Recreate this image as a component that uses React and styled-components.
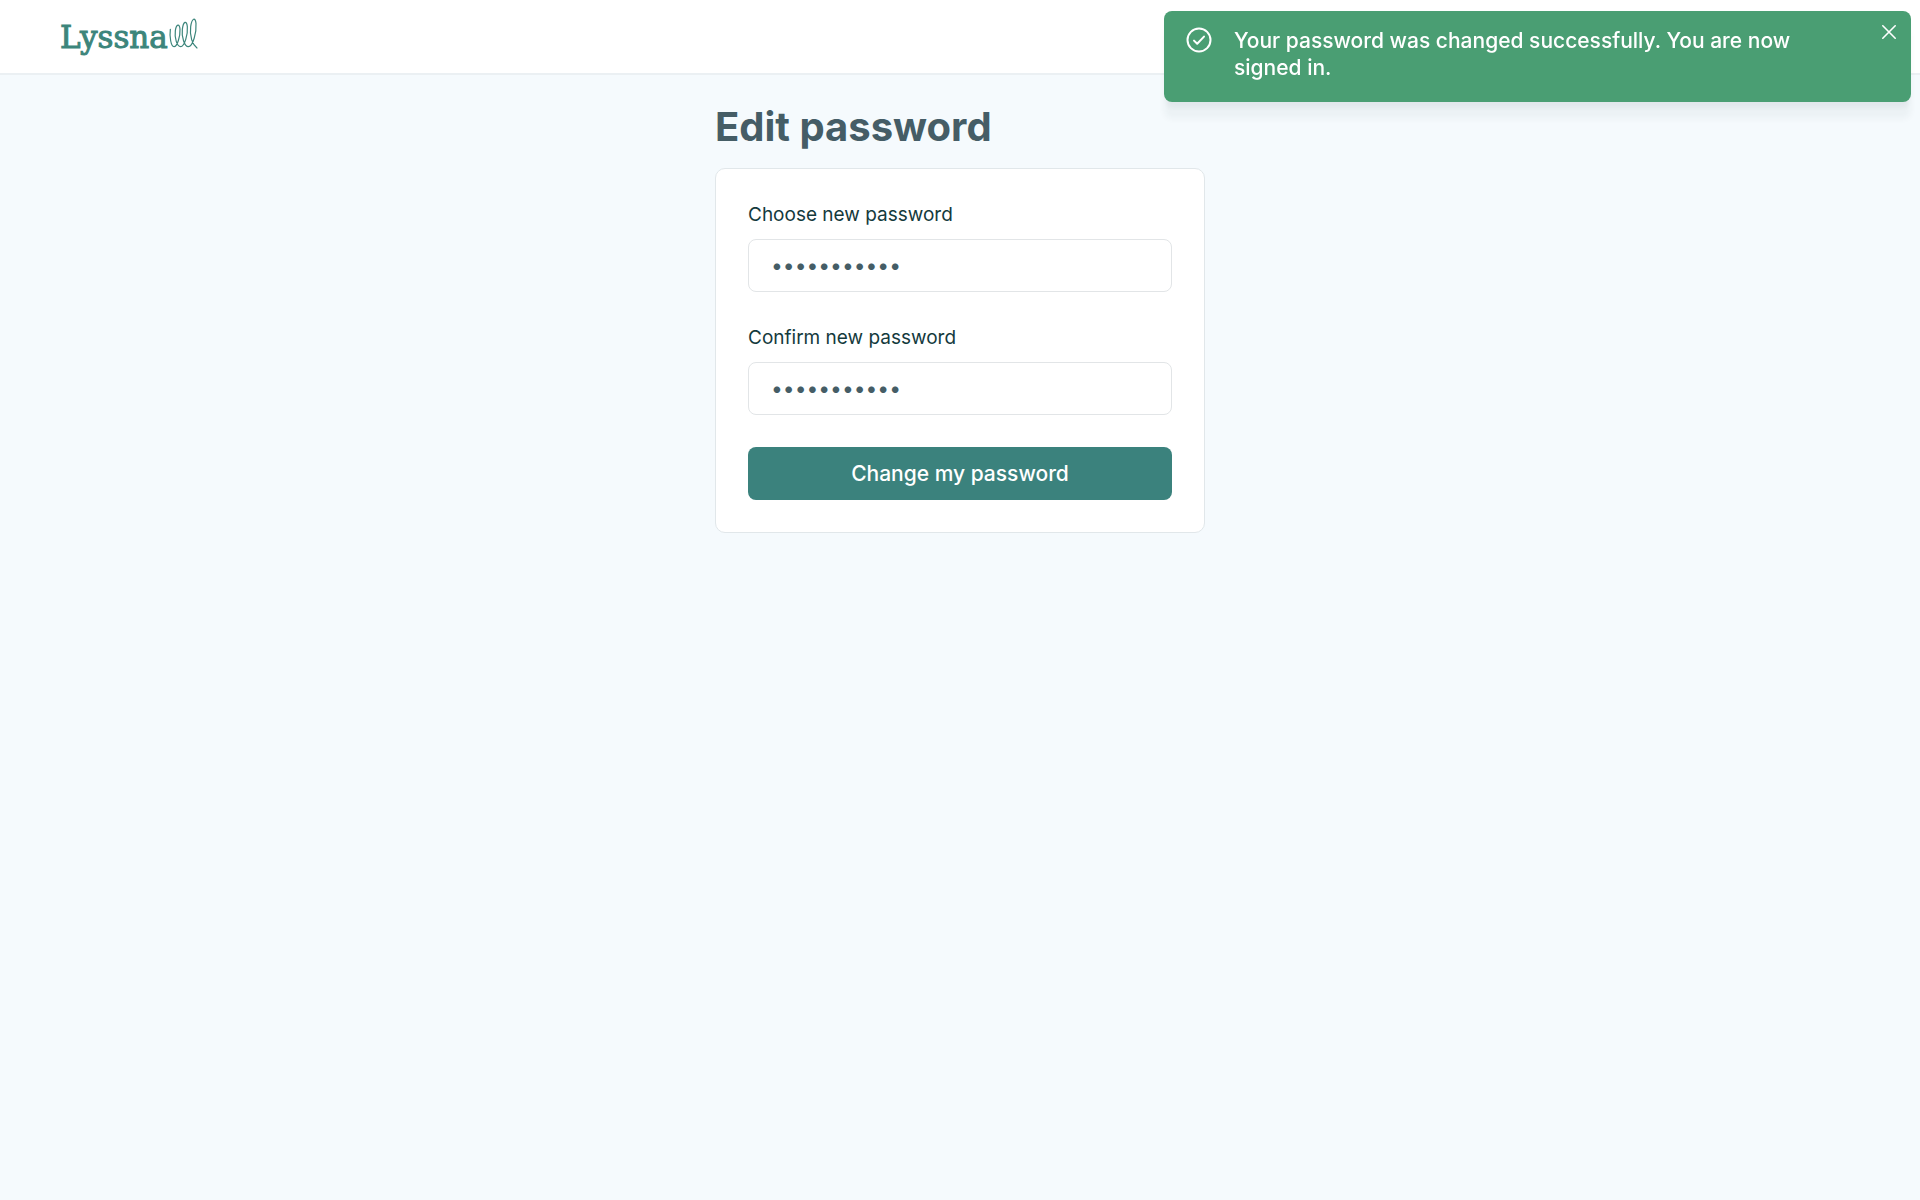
import React, { useState } from 'react';
import styled, { createGlobalStyle } from 'styled-components';

const GlobalStyle = createGlobalStyle`
  * {
    box-sizing: border-box;
  }

  body {
    margin: 0;
    background-color: #f5fafd;
    font-family: Inter, "Liberation Sans", sans-serif;
    color: #455d66;
  }
`;

const Header = styled.header`
  display: flex;
  align-items: flex-start;
  height: 75px;
  padding: 15px 60px;
  background-color: #fff;
  border-bottom: 2px solid #ebf0f3;
`;

const Logo = styled.a`
  display: flex;
  align-items: flex-start;
  color: #3c857b;
  text-decoration: none;

  span {
    font-family: "DejaVu Serif", serif;
    font-size: 31px;
    line-height: 44px;
    -webkit-text-stroke: 1px #3c857b;
  }

  svg {
    margin-top: 3px;
  }
`;

const Main = styled.main`
  width: 100%;
  max-width: 490px;
  margin: 0 auto;
  padding: 28px 0;
`;

const Title = styled.h1`
  margin: 0 0 17px;
  font-size: 40px;
  font-weight: 700;
  line-height: 48px;
`;

const Card = styled.form`
  display: flex;
  flex-direction: column;
  gap: 32px;
  padding: 32px;
  background-color: #fff;
  border: 1px solid #e1e7ea;
  border-radius: 10px;
`;

const Field = styled.div`
  display: flex;
  flex-direction: column;
  gap: 10px;
`;

const Label = styled.label`
  font-size: 19px;
  line-height: 28px;
  color: #143a3d;
`;

const PasswordInput = styled.input`
  width: 100%;
  height: 53px;
  padding: 0 22px;
  background-color: #fff;
  border: 1px solid #e2e5e7;
  border-radius: 8px;
  font-family: inherit;
  font-size: 21px;
  color: #455d66;
  outline: none;
`;

const SubmitButton = styled.button`
  height: 53px;
  border: 0;
  border-radius: 8px;
  background-color: #3b827d;
  font-family: inherit;
  font-size: 21px;
  font-weight: 500;
  color: #fff;
  cursor: pointer;
`;

const Toast = styled.div`
  position: fixed;
  top: 11px;
  right: 9px;
  display: flex;
  align-items: flex-start;
  width: 100%;
  max-width: 747px;
  padding: 16px 14px 21px 22px;
  border-radius: 8px;
  background-color: #4a9e73;
  box-shadow: 0 17px 6px 0 rgba(20, 40, 60, 0.04),
    0 8px 6px -2px rgba(20, 40, 60, 0.05);
  color: #fff;

  p {
    flex: 1;
    margin: 0 72px 0 22px;
    font-size: 21px;
    font-weight: 500;
    line-height: 27px;
  }
`;

const CloseButton = styled.button`
  display: flex;
  margin-top: -3px;
  padding: 0;
  border: 0;
  background: none;
  color: inherit;
  cursor: pointer;
`;

const Squiggle = () => (
  <svg width="30" height="31" viewBox="0 0 90 93" fill="none" stroke="currentColor" strokeWidth="3.6" strokeLinecap="round">
    <path d="M7 34C4 56 9 86 18 86C28 86 37 54 36 34C35 16 25 17 22 38C19 60 27 86 38 86C50 86 60 48 58 26C56 6 46 9 43 34C40 58 50 86 61 86C75 86 86 42 84 16C82 -3 72 -1 68 26C64 56 74 80 87 90" />
  </svg>
);

const CheckIcon = () => (
  <svg width="26" height="26" viewBox="0 0 26 26" fill="none" stroke="currentColor" strokeWidth="2" strokeLinecap="round" strokeLinejoin="round">
    <circle cx="13" cy="13" r="11.5" />
    <path d="M8 13.6L11.2 16.8L18 9.6" />
  </svg>
);

const CloseIcon = () => (
  <svg width="16" height="16" viewBox="0 0 16 16" stroke="currentColor" strokeWidth="1.6" strokeLinecap="round">
    <path d="M1.8 1.8L14.2 14.2M14.2 1.8L1.8 14.2" />
  </svg>
);

const App = () => {
  const [password, setPassword] = useState('lyssna-2024');
  const [confirmation, setConfirmation] = useState('lyssna-2024');
  const [showToast, setShowToast] = useState(true);

  return (
    <>
      <GlobalStyle />
      <Header>
        <Logo href="/">
          <span>Lyssna</span>
          <Squiggle />
        </Logo>
      </Header>
      <Main>
        <Title>Edit password</Title>
        <Card onSubmit={(e) => e.preventDefault()}>
          <Field>
            <Label htmlFor="password">Choose new password</Label>
            <PasswordInput
              id="password"
              type="password"
              value={password}
              onChange={(e) => setPassword(e.target.value)}
            />
          </Field>
          <Field>
            <Label htmlFor="confirmation">Confirm new password</Label>
            <PasswordInput
              id="confirmation"
              type="password"
              value={confirmation}
              onChange={(e) => setConfirmation(e.target.value)}
            />
          </Field>
          <SubmitButton type="submit">Change my password</SubmitButton>
        </Card>
      </Main>
      {showToast && (
        <Toast role="status">
          <CheckIcon />
          <p>Your password was changed successfully. You are now signed in.</p>
          <CloseButton type="button" aria-label="Close" onClick={() => setShowToast(false)}>
            <CloseIcon />
          </CloseButton>
        </Toast>
      )}
    </>
  );
};

export default App;
